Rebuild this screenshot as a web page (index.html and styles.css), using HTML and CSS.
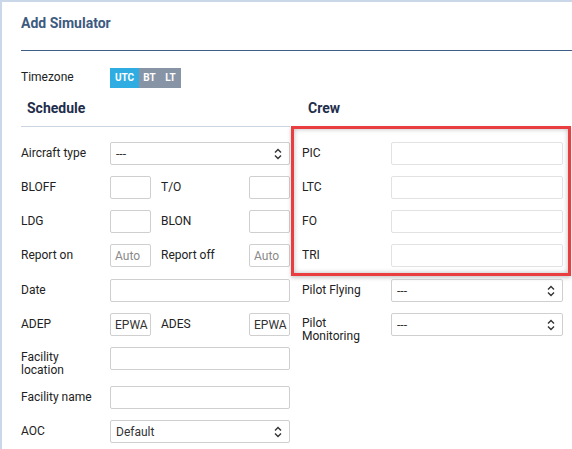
FILE: index.html
```html
<!DOCTYPE html>
<html>
<head>
<meta charset="utf-8">
<link rel="stylesheet" href="styles.css">
</head>
<body>
<div class="panel">
  <div class="panel-head">
    <h1 class="title">Add Simulator</h1>
  </div>
  <div class="tz-row">
    <span class="label">Timezone</span>
    <div class="tz-toggle">
      <span class="tz tz-on">UTC</span><span class="tz">BT</span><span class="tz">LT</span>
    </div>
  </div>
  <div class="columns">
    <section class="col">
      <h2 class="section-title">Schedule</h2>
      <div class="row">
        <span class="label">Aircraft type</span>
        <div class="select"><span>---</span><svg class="chev" width="8" height="12" viewBox="0 0 8 12"><path d="M1 4.5 4 1.5 7 4.5M1 7.5 4 10.5 7 7.5" fill="none" stroke="#333" stroke-width="1.4"/></svg></div>
      </div>
      <div class="row pair">
        <span class="label">BLOFF</span><input class="field">
        <span class="label mid">T/O</span><input class="field">
      </div>
      <div class="row pair">
        <span class="label">LDG</span><input class="field">
        <span class="label mid">BLON</span><input class="field">
      </div>
      <div class="row pair">
        <span class="label">Report on</span><input class="field" placeholder="Auto">
        <span class="label mid">Report off</span><input class="field" placeholder="Auto">
      </div>
      <div class="row date-row">
        <span class="label">Date</span><input class="field">
      </div>
      <div class="row pair">
        <span class="label">ADEP</span><input class="field" value="EPWA">
        <span class="label mid">ADES</span><input class="field" value="EPWA">
      </div>
      <div class="row">
        <span class="label two">Facility<br>location</span><input class="field">
      </div>
      <div class="row after-two">
        <span class="label">Facility name</span><input class="field">
      </div>
      <div class="row">
        <span class="label">AOC</span>
        <div class="select"><span>Default</span><svg class="chev" width="8" height="12" viewBox="0 0 8 12"><path d="M1 4.5 4 1.5 7 4.5M1 7.5 4 10.5 7 7.5" fill="none" stroke="#333" stroke-width="1.4"/></svg></div>
      </div>
    </section>
    <section class="col">
      <h2 class="section-title">Crew</h2>
      <div class="highlight">
        <div class="row"><span class="label">PIC</span><input class="field"></div>
        <div class="row"><span class="label">LTC</span><input class="field"></div>
        <div class="row"><span class="label">FO</span><input class="field"></div>
        <div class="row"><span class="label">TRI</span><input class="field"></div>
      </div>
      <div class="row after-hl">
        <span class="label">Pilot Flying</span>
        <div class="select"><span>---</span><svg class="chev" width="8" height="12" viewBox="0 0 8 12"><path d="M1 4.5 4 1.5 7 4.5M1 7.5 4 10.5 7 7.5" fill="none" stroke="#333" stroke-width="1.4"/></svg></div>
      </div>
      <div class="row">
        <span class="label two">Pilot<br>Monitoring</span>
        <div class="select"><span>---</span><svg class="chev" width="8" height="12" viewBox="0 0 8 12"><path d="M1 4.5 4 1.5 7 4.5M1 7.5 4 10.5 7 7.5" fill="none" stroke="#333" stroke-width="1.4"/></svg></div>
      </div>
    </section>
  </div>
</div>
</body>
</html>
```
FILE: styles.css
```css
* { box-sizing: border-box; }

html, body {
  margin: 0;
  padding: 0;
  background: #fff;
}

body {
  font-family: Roboto, "Liberation Sans", sans-serif;
  font-size: 12px;
  color: #222;
  width: 572px;
  height: 449px;
  overflow: hidden;
}

.panel {
  border-top: 2px solid #c9d7e8;
  border-left: 2px solid #c9d7e8;
  padding-left: 19px;
  height: 449px;
}

.panel-head {
  padding-top: 13px;
  border-bottom: 1px solid #3e5e86;
  height: 49px;
}

.title {
  margin: 0;
  font-size: 14px;
  line-height: 17px;
  font-weight: 700;
  color: #3d5a80;
}

.tz-row {
  display: grid;
  grid-template-columns: 89px auto;
  align-items: center;
  margin-top: 15px;
  height: 20px;
}

.tz-toggle {
  display: flex;
  height: 20px;
  width: 71px;
}

.tz {
  background: #8794a6;
  color: #fff;
  font-size: 10px;
  font-weight: 700;
  line-height: 20px;
  width: 21px;
  text-align: center;
}

.tz-on {
  background: #2fade2;
  width: 29px;
}

.columns {
  display: grid;
  grid-template-columns: 269px 261px;
  column-gap: 12px;
  margin-top: 14px;
}

.section-title {
  margin: 0;
  padding: 0 0 9px 6px;
  font-size: 14px;
  line-height: 17px;
  font-weight: 700;
  color: #1f2e4b;
  border-bottom: 1px solid #cbd5e1;
}

.col:last-child .section-title {
  border-bottom-color: transparent;
}

.row {
  display: grid;
  grid-template-columns: 89px 1fr;
  align-items: start;
  min-height: 23px;
  margin-top: 11px;
}

.col > .section-title + .row { margin-top: 15px; }

.date-row { margin-top: 12px; }

.after-two { margin-top: 9px; }

.pair {
  grid-template-columns: 89px 41px 98px 41px;
}

.label {
  line-height: 23px;
  white-space: nowrap;
}

.label.mid { padding-left: 10px; }

.label.two {
  line-height: 13px;
  padding-top: 4px;
}

.field {
  height: 23px;
  width: 100%;
  border: 1px solid #cfcfcf;
  border-radius: 2px;
  padding: 0 4px;
  font: 12px Roboto, "Liberation Sans", sans-serif;
  color: #333;
  background: #fff;
  outline: none;
  margin: 0;
}

.pair .field { padding: 0 0 0 4px; }

.field::placeholder { color: #8a8a8a; }

.select {
  height: 23px;
  border: 1px solid #cfcfcf;
  border-radius: 2px;
  padding: 0 7px 0 5px;
  display: flex;
  align-items: center;
  justify-content: space-between;
  color: #333;
}

.chev { display: block; }

.highlight {
  margin: -1px -8px 0 -11px;
  padding: 13px 5px 6px 8px;
  border: 3px solid #ea3d3f;
  box-shadow: inset 0 0 5px rgba(0, 0, 0, 0.28), 0 2px 4px rgba(0, 0, 0, 0.2);
}

.highlight .row:first-child { margin-top: 0; }

.highlight .field { border-color: #e2e2e2; }

.after-hl { margin-top: 3px; }
```
